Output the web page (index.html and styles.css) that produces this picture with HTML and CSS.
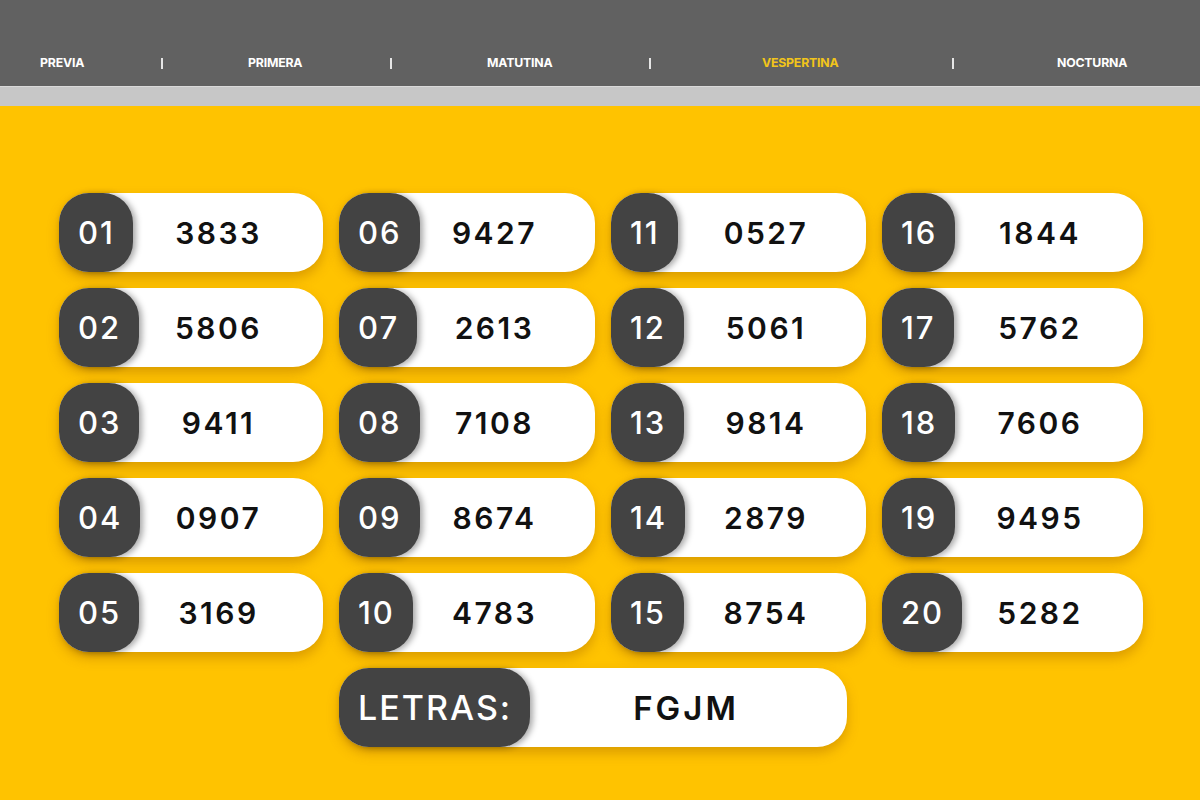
FILE: index.html
```html
<!DOCTYPE html>
<html lang="es">
<head>
<meta charset="utf-8">
<title>Resultados Vespertina</title>
<link rel="stylesheet" href="styles.css">
</head>
<body>
<header class="topbar">
  <nav class="nav">
    <a class="nav-item">PREVIA</a><span class="sep"></span>
    <a class="nav-item">PRIMERA</a><span class="sep"></span>
    <a class="nav-item">MATUTINA</a><span class="sep"></span>
    <a class="nav-item active">VESPERTINA</a><span class="sep"></span>
    <a class="nav-item">NOCTURNA</a>
  </nav>
  <div class="strip"></div>
</header>
<main class="board">
  <div class="grid">
    <div class="pill"><span class="badge">01</span><span class="num">3833</span></div>
    <div class="pill"><span class="badge">06</span><span class="num">9427</span></div>
    <div class="pill"><span class="badge">11</span><span class="num">0527</span></div>
    <div class="pill"><span class="badge">16</span><span class="num">1844</span></div>
    <div class="pill"><span class="badge">02</span><span class="num">5806</span></div>
    <div class="pill"><span class="badge">07</span><span class="num">2613</span></div>
    <div class="pill"><span class="badge">12</span><span class="num">5061</span></div>
    <div class="pill"><span class="badge">17</span><span class="num">5762</span></div>
    <div class="pill"><span class="badge">03</span><span class="num">9411</span></div>
    <div class="pill"><span class="badge">08</span><span class="num">7108</span></div>
    <div class="pill"><span class="badge">13</span><span class="num">9814</span></div>
    <div class="pill"><span class="badge">18</span><span class="num">7606</span></div>
    <div class="pill"><span class="badge">04</span><span class="num">0907</span></div>
    <div class="pill"><span class="badge">09</span><span class="num">8674</span></div>
    <div class="pill"><span class="badge">14</span><span class="num">2879</span></div>
    <div class="pill"><span class="badge">19</span><span class="num">9495</span></div>
    <div class="pill"><span class="badge">05</span><span class="num">3169</span></div>
    <div class="pill"><span class="badge">10</span><span class="num">4783</span></div>
    <div class="pill"><span class="badge">15</span><span class="num">8754</span></div>
    <div class="pill"><span class="badge">20</span><span class="num">5282</span></div>
    <div class="pill pill-letras"><span class="badge badge-letras">LETRAS:</span><span class="num num-letras">FGJM</span></div>
  </div>
</main>
</body>
</html>
```

FILE: styles.css
```css
* { box-sizing: border-box; }
html, body { margin: 0; padding: 0; }
body {
  width: 1200px;
  height: 800px;
  overflow: hidden;
  background: #ffc300;
  font-family: "Inter", "Noto Sans", sans-serif;
}
.topbar { background: #616161; }
.nav {
  height: 86px;
  padding: 56px 0 0 40px;
  display: grid;
  grid-template-columns: 121px 87px 142px 97px 162px 113px 190px 105px auto;
  align-items: start;
  font-weight: 700;
  font-size: 12.3px;
  line-height: 14px;
  color: #ffffff;
}
.nav-item { color: #ffffff; letter-spacing: -0.2px; }
.nav-item.active { color: #f2c51a; }
.sep {
  display: block;
  width: 2px;
  height: 11px;
  margin-top: 2px;
  background: #e6e6e6;
}
.strip {
  height: 20px;
  background: #c7c7c7;
  border-top: 1px solid #d9d9d9;
}
.board { padding: 87px 57px 0 59px; }
.grid {
  display: grid;
  grid-template-columns: 264px 256px 255px 261px;
  column-gap: 16px;
  row-gap: 16px;
}
.pill {
  display: grid;
  height: 79px;
  background: #ffffff;
  border-radius: 30px;
  box-shadow: 0 6px 12px rgba(160, 95, 0, 0.38);
}
.badge, .num { grid-area: 1 / 1; align-self: stretch; display: flex; align-items: center; }
.badge {
  justify-self: start;
  z-index: 1;
  padding: 0 18px 0 19px;
  background: #434343;
  color: #ffffff;
  border-radius: 30px;
  font-size: 31px;
  font-weight: 500;
  letter-spacing: 2px;
  box-shadow: 3px 1px 6px rgba(0, 0, 0, 0.35);
}
.num {
  justify-content: center;
  padding-left: 55px;
  color: #111111;
  font-size: 30px;
  font-weight: 600;
  letter-spacing: 2.5px;
}
.pill-letras {
  grid-column: 2 / 4;
  width: 508px;
  justify-self: start;
}
.badge-letras { font-size: 34px; letter-spacing: 2px; padding: 0 18px 0 19px; }
.num-letras { padding-left: 186px; font-size: 33px; letter-spacing: 3px; }
```
